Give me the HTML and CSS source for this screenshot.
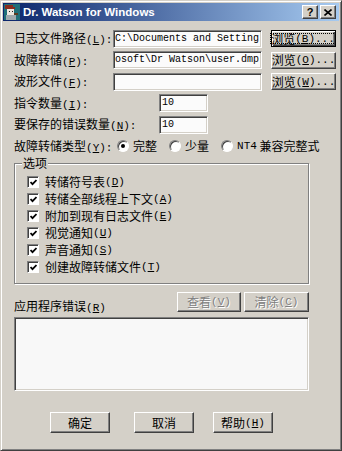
FILE: index.html
```html
<!DOCTYPE html>
<html lang="zh-CN">
<head>
    <meta charset="UTF-8">
    <meta name="viewport" content="width=device-width, initial-scale=1.0">
    <title>Dr. Watson for Windows</title>
    <link rel="stylesheet" href="styles.css">
</head>
<body>
    <div class="window">
        <div class="titlebar">
            <svg class="app-icon" width="16" height="16" viewBox="0 0 16 16">
                <rect width="16" height="16" fill="#1f6f78"/>
                <path d="M1 1h8v2h2v2H1z" fill="#8a2e1e"/>
                <path d="M3 5h7v6H3z" fill="#ece8e0"/>
                <path d="M5 7h1v1H5zM8 7h1v1H8z" fill="#222"/>
                <path d="M2 11h10v5H2z" fill="#a0aaae"/>
                <path d="M10 9h4v2h-4z" fill="#5a3a20"/>
            </svg>
            <span class="title">Dr. Watson for Windows</span>
            <span class="caption-btn">?</span>
            <span class="caption-btn">
                <svg width="8" height="7" viewBox="0 0 8 7"><path d="M0.5 0.5L7.5 6.5M7.5 0.5L0.5 6.5" stroke="#000" stroke-width="1.6"/></svg>
            </span>
        </div>

        <div class="client">
            <div class="fields">
                <div class="row">
                    <span class="lbl">日志文件路径<span class="key">(<u>L</u>):</span></span>
                    <div class="edit">C:\Documents and Setting</div>
                    <button class="btn browse default"><span class="focus">浏览<span class="key">(<u>B</u>)...</span></span></button>
                </div>
                <div class="row">
                    <span class="lbl">故障转储<span class="key">(<u>P</u>):</span></span>
                    <div class="edit">osoft\Dr Watson\user.dmp</div>
                    <button class="btn browse">浏览<span class="key">(<u>O</u>)...</span></button>
                </div>
                <div class="row">
                    <span class="lbl">波形文件<span class="key">(<u>F</u>):</span></span>
                    <div class="edit"></div>
                    <button class="btn browse">浏览<span class="key">(<u>W</u>)...</span></button>
                </div>
                <div class="row">
                    <span class="lbl wide">指令数量<span class="key">(<u>I</u>):</span></span>
                    <div class="edit num">10</div>
                </div>
                <div class="row">
                    <span class="lbl wide">要保存的错误数量<span class="key">(<u>N</u>):</span></span>
                    <div class="edit num">10</div>
                </div>
                <div class="row">
                    <span class="lbl type">故障转储类型<span class="key">(<u>Y</u>):</span></span>
                    <span class="opt"><span class="radio on"></span>完整</span>
                    <span class="opt"><span class="radio"></span>少量</span>
                    <span class="opt"><span class="radio"></span><span class="key">NT4</span>&nbsp;兼容完整式</span>
                </div>
            </div>

            <div class="group">
                <span class="legend">选项</span>
                <div class="checks">
                    <div class="check"><span class="box"><svg width="7" height="7" viewBox="0 0 7 7"><path d="M0.5 3L2.5 5.2L6.5 1" fill="none" stroke="#000" stroke-width="1.8"/></svg></span>转储符号表<span class="key">(<u>D</u>)</span></div>
                    <div class="check"><span class="box"><svg width="7" height="7" viewBox="0 0 7 7"><path d="M0.5 3L2.5 5.2L6.5 1" fill="none" stroke="#000" stroke-width="1.8"/></svg></span>转储全部线程上下文<span class="key">(<u>A</u>)</span></div>
                    <div class="check"><span class="box"><svg width="7" height="7" viewBox="0 0 7 7"><path d="M0.5 3L2.5 5.2L6.5 1" fill="none" stroke="#000" stroke-width="1.8"/></svg></span>附加到现有日志文件<span class="key">(<u>E</u>)</span></div>
                    <div class="check"><span class="box"><svg width="7" height="7" viewBox="0 0 7 7"><path d="M0.5 3L2.5 5.2L6.5 1" fill="none" stroke="#000" stroke-width="1.8"/></svg></span>视觉通知<span class="key">(<u>U</u>)</span></div>
                    <div class="check"><span class="box"><svg width="7" height="7" viewBox="0 0 7 7"><path d="M0.5 3L2.5 5.2L6.5 1" fill="none" stroke="#000" stroke-width="1.8"/></svg></span>声音通知<span class="key">(<u>S</u>)</span></div>
                    <div class="check"><span class="box"><svg width="7" height="7" viewBox="0 0 7 7"><path d="M0.5 3L2.5 5.2L6.5 1" fill="none" stroke="#000" stroke-width="1.8"/></svg></span>创建故障转储文件<span class="key">(<u>T</u>)</span></div>
                </div>
            </div>

            <div class="errors-head">
                <span class="lbl">应用程序错误<span class="key">(<u>R</u>)</span></span>
                <button class="btn small" disabled>查看<span class="key">(<u>V</u>)</span></button>
                <button class="btn small" disabled>清除<span class="key">(<u>C</u>)</span></button>
            </div>
            <div class="listbox"></div>

            <div class="footer">
                <button class="btn">确定</button>
                <button class="btn">取消</button>
                <button class="btn help">帮助<span class="key">(<u>H</u>)</span></button>
            </div>
        </div>
    </div>
</body>
</html>
```

FILE: styles.css
```css
* {
    box-sizing: border-box;
}

body {
    margin: 0;
    background: #d4d0c8;
    color: #000;
    font: 12px/14px "Noto Sans CJK SC", sans-serif;
}

.window {
    width: 342px;
    height: 451px;
    padding: 2px;
    border: 1px solid;
    border-color: #d4d0c8 #404040 #404040 #d4d0c8;
    box-shadow: inset 1px 1px #fff, inset -1px -1px #808080;
    display: flex;
    flex-direction: column;
}

/* title bar */
.titlebar {
    height: 18px;
    display: flex;
    align-items: center;
    padding: 0 3px 0 1px;
    background: linear-gradient(to right, #0a246a, #a6caf0);
}

.app-icon {
    flex: none;
}

.title {
    flex: 1;
    margin-left: 3px;
    color: #fff;
    font: bold 11.5px/14px "Liberation Sans", sans-serif;
    white-space: nowrap;
}

.caption-btn {
    width: 16px;
    height: 14px;
    margin-left: 2px;
    display: flex;
    align-items: center;
    justify-content: center;
    background: #d4d0c8;
    border: 1px solid;
    border-color: #fff #404040 #404040 #fff;
    box-shadow: inset -1px -1px #808080;
    font: bold 11px/12px "Liberation Sans", sans-serif;
}

/* client area */
.client {
    flex: 1;
    padding: 8.5px 0 0 11px;
}

.key {
    font: 11px "Liberation Mono", monospace;
}

.fields {
    display: flex;
    flex-direction: column;
    gap: 3.5px;
}

.row {
    height: 18px;
    display: flex;
    align-items: center;
}

.lbl {
    width: 99px;
    white-space: nowrap;
}

.lbl.wide {
    width: 145px;
}

.lbl.type {
    width: 103px;
}

.edit {
    width: 149px;
    height: 18px;
    padding: 0 1px;
    background: #fbfbfb;
    border: 1px solid;
    border-color: #808080 #fff #fff #808080;
    box-shadow: inset 1px 1px #404040, inset -1px -1px #d4d0c8;
    font: 10px/16px "Liberation Mono", monospace;
    white-space: nowrap;
    overflow: hidden;
}

.edit.num {
    width: 49px;
    padding-left: 2px;
}

.btn {
    padding: 0;
    display: flex;
    align-items: center;
    justify-content: center;
    background: #d4d0c8;
    color: #000;
    font: inherit;
    line-height: 14px;
    white-space: nowrap;
    border: 1px solid;
    border-color: #fff #404040 #404040 #fff;
    box-shadow: inset -1px -1px #808080;
}

.btn.default {
    border-color: #000;
    box-shadow: inset 1px 1px #fff, inset -1px -1px #404040, inset -2px -2px #808080;
}

.btn .focus {
    flex: 1;
    align-self: stretch;
    margin: 2px 3px 2px 2px;
    display: flex;
    align-items: center;
    justify-content: center;
    border: 1px dotted #000;
}

.btn.browse {
    width: 65px;
    height: 17px;
    margin-left: 9px;
}

.btn:disabled {
    color: #808080;
    text-shadow: 1px 1px #fff;
}

/* radio buttons */
.opt {
    display: flex;
    align-items: center;
}

.opt + .opt {
    margin-left: 12px;
}

.radio {
    width: 12px;
    height: 12px;
    margin-right: 4px;
    border-radius: 50%;
    background: #fff;
    border: 1px solid;
    border-color: #808080 #fff #fff #808080;
    box-shadow: inset 1px 1px #404040;
}

.radio.on::after {
    content: "";
    display: block;
    width: 4px;
    height: 4px;
    margin: 3px;
    border-radius: 50%;
    background: #000;
}

/* options group */
.group {
    position: relative;
    width: 295px;
    height: 121px;
    margin-top: 8px;
    padding: 12px 0 0 12px;
    border: 1px solid #808080;
    box-shadow: inset 1px 1px #fff, 1px 1px #fff;
}

.legend {
    position: absolute;
    top: -8px;
    left: 7px;
    padding: 0 1px;
    background: #d4d0c8;
}

.checks {
    display: flex;
    flex-direction: column;
    gap: 5px;
}

.check {
    height: 12px;
    display: flex;
    align-items: center;
    white-space: nowrap;
}

.box {
    width: 12px;
    height: 12px;
    margin-right: 6px;
    display: flex;
    align-items: center;
    justify-content: center;
    background: #fff;
    border: 1px solid;
    border-color: #808080 #fff #fff #808080;
    box-shadow: inset 1px 1px #404040;
}

/* application errors */
.errors-head {
    width: 295px;
    height: 20px;
    margin-top: 8px;
    display: flex;
    align-items: flex-end;
}

.errors-head .lbl {
    flex: 1;
    width: auto;
    margin-bottom: -2px;
}

.btn.small {
    width: 64px;
    height: 20px;
}

.btn.small + .btn.small {
    width: 65px;
    margin-left: 3px;
}

.listbox {
    width: 295px;
    height: 74px;
    margin-top: 5px;
    background: #f8f8f8;
    border: 1px solid;
    border-color: #808080 #fff #fff #808080;
    box-shadow: inset 1px 1px #404040, inset -1px -1px #d4d0c8;
}

.footer {
    display: flex;
    margin-top: 21px;
    padding-left: 36px;
}

.footer .btn {
    width: 60px;
    height: 21px;
}

.footer .btn + .btn {
    margin-left: 24px;
}

.footer .btn.help {
    margin-left: 19px;
}
```
